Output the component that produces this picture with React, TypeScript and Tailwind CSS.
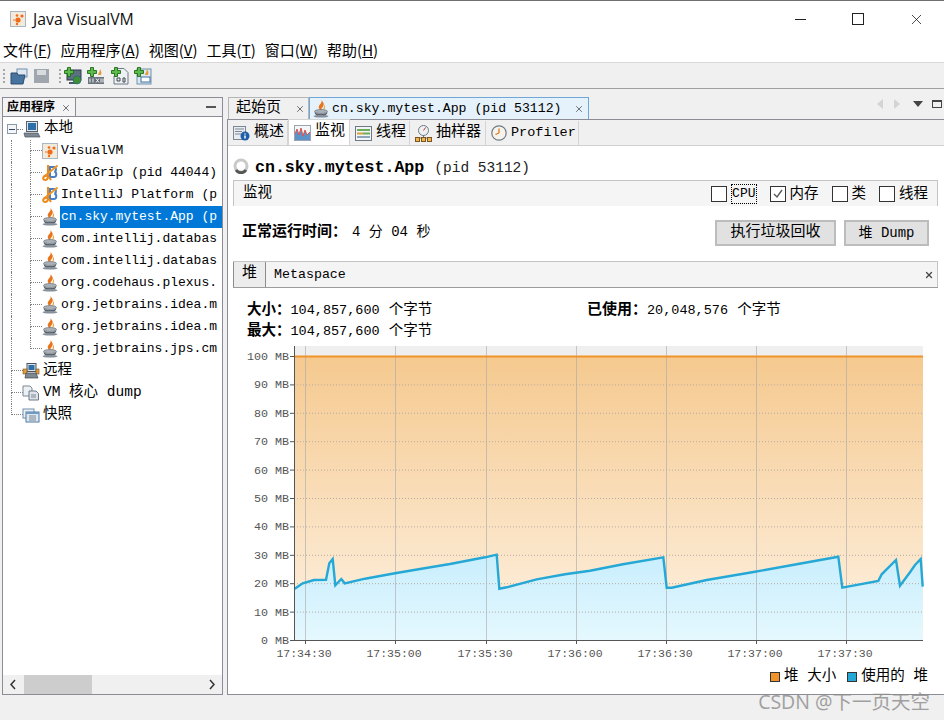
import { X } from 'lucide-react'

const MONO = "font-['Liberation_Mono','Noto_Sans_CJK_SC',monospace]"
const LINE = 'border-dotted border-[#808080]'

const JavaIcon = () => (
  <svg width="16" height="18" viewBox="0 0 16 18" className="shrink-0">
    <path d="M8.500 0c1 2 3 3 2 5.500S8 8 8.500 10.500C5.500 9 5 7 6.500 5S9 2.500 8.500 0z" fill="#e8741c" />
    <path d="M11 4.500c.5 1.500-.5 3.500-1 6 2-1 3-3.500 1-6z" fill="#f0a040" />
    <ellipse cx="8" cy="11.500" rx="6.500" ry="2" fill="#aab0b6" stroke="#6b747c" strokeWidth="0.700" />
    <path d="M1.500 12c.5 3 2.500 4 6.500 4s6-1 6.500-4c-1 1.500-3.500 2-6.500 2s-5.500-.5-6.500-2z" fill="#56606a" />
    <ellipse cx="8" cy="16.200" rx="7.500" ry="1.400" fill="#87909a" />
  </svg>
)

const VmIcon = ({ size = 16 }: { size?: number }) => (
  <svg width={size} height={size} viewBox="0 0 16 16" className="shrink-0">
    <rect x="0.500" y="0.500" width="15" height="15" fill="#f3ead9" stroke="#a9b6c4" />
    <circle cx="8" cy="9" r="2.600" fill="#ef6c1a" />
    <circle cx="7" cy="4.500" r="1.300" fill="#ef6c1a" />
    <circle cx="12" cy="5" r="1.600" fill="#ef6c1a" />
    <circle cx="4" cy="9" r="1" fill="#f29a5e" />
    <circle cx="7" cy="13" r="1.200" fill="#ef6c1a" />
  </svg>
)

const JbIcon = () => (
  <svg width="16" height="18" viewBox="0 0 16 18" className="shrink-0">
    <path d="M8 3h4c2.500 0 2.500 4.500.3 4.800 2.700.3 2.700 5.200-.3 5.200H8z" fill="none" stroke="#4a7fc4" strokeWidth="2" />
    <path d="M15.500 1.500L1.500 13" fill="none" stroke="#f09a2c" strokeWidth="2" />
    <path d="M6 1v11c0 2-1 4-3 4s-2.500-2-1-3.500 5-.5 7 3.500" fill="none" stroke="#ec8a1c" strokeWidth="2" />
  </svg>
)

const HostIcon = () => (
  <svg width="18" height="17" viewBox="0 0 18 17" className="shrink-0">
    <rect x="3.500" y="0.500" width="11" height="10" fill="#dfe4ea" stroke="#59626c" />
    <rect x="5" y="2" width="8" height="7" fill="#2e6fa8" />
    <path d="M1 12h14l2 4H2z" fill="#7d8893" stroke="#4a535c" strokeWidth="0.700" />
  </svg>
)

const RemoteIcon = () => (
  <svg width="18" height="17" viewBox="0 0 18 17" className="shrink-0">
    <rect x="5" y="0.500" width="9" height="8" fill="#dfe4ea" stroke="#4a535c" />
    <rect x="6.500" y="2" width="6" height="5" fill="#2e6fa8" />
    <rect x="1" y="6" width="4" height="5" fill="#e39a3a" stroke="#7a5520" strokeWidth="0.600" />
    <rect x="14" y="6" width="3" height="5" fill="#e39a3a" stroke="#7a5520" strokeWidth="0.600" />
    <path d="M4 10h10l2 5H3z" fill="#7d8893" stroke="#3e464e" strokeWidth="0.700" />
  </svg>
)

const DumpIcon = () => (
  <svg width="18" height="17" viewBox="0 0 18 17" className="shrink-0">
    <path d="M1 1h7l2 2v8H1z" fill="#eef1f4" stroke="#7b8794" />
    <path d="M7 6h7l2.500 2.500V15H7z" fill="#dfe4ea" stroke="#6d7986" />
    <path d="M9 10h5M9 12h5" stroke="#7b8794" />
  </svg>
)

const SnapIcon = () => (
  <svg width="18" height="17" viewBox="0 0 18 17" className="shrink-0">
    <rect x="1" y="2" width="11" height="9" fill="#eef1f4" stroke="#6f8fae" />
    <rect x="4" y="5" width="13" height="10" fill="#dfe8f0" stroke="#4f7aa5" />
    <path d="M4 5h13v2H4z" fill="#6f9ac4" />
    <path d="M7 9h7M7 11h7M7 13h7" stroke="#7b8794" />
  </svg>
)

const PlusBadge = () => (
  <path d="M3.500 0.500h3v3h3v3h-3v3h-3v-3h-3v-3h3z" fill="#5dbb4a" stroke="#1f6b1a" strokeWidth="0.900" />
)

const ToolIcon = ({ kind }: { kind: string }) => (
  <svg width="18" height="18" viewBox="0 0 18 18" className="shrink-0">
    {kind === 'host' && (
      <>
        <rect x="3" y="3" width="14" height="10" fill="#5d7082" stroke="#2e3d4c" />
        <rect x="5" y="15" width="9" height="2" fill="#4a5a6a" />
        <circle cx="13" cy="13" r="4" fill="#3f8f3a" stroke="#1f5f7a" strokeWidth="0.600" />
      </>
    )}
    {kind === 'jmx' && (
      <>
        <rect x="1" y="10" width="16" height="7" fill="#6a737c" />
        <path d="M13 2c1 2 2 3 1 6h-3c0-2 2-3 2-6z" fill="#e39a3a" />
        <path d="M3 11.500v4M6 11.500v4M9 11.500l3 4M12 11.500l-3 4M14 11.500v4M16 11.500v4" stroke="#f2f4f6" />
      </>
    )}
    {kind === 'dump' && (
      <>
        <path d="M6 1.500h7l4 4v11.500H3v-8h3z" fill="#eef1f4" stroke="#6d7986" />
        <path d="M6 11h3v3H6zM12 11h2v4h-2z" fill="none" stroke="#3c4650" />
      </>
    )}
    {kind === 'snap' && (
      <>
        <rect x="3" y="2" width="14" height="15" fill="#dfe8f0" stroke="#6f8fae" />
        <rect x="7" y="10" width="9" height="5" fill="#fff" stroke="#3f6f9e" />
        <path d="M13 2c1 2 2 3 1 6h-3c0-2 2-3 2-6z" fill="#e39a3a" />
      </>
    )}
    <PlusBadge />
  </svg>
)

const Elbow = ({ last }: { last?: boolean }) => (
  <div className="h-full w-[12px] shrink-0">
    <div className={`h-[11px] border-b border-l ${LINE}`} />
    {!last && <div className={`h-[11px] border-l ${LINE}`} />}
  </div>
)

const Guide = () => <div className={`h-full w-[19px] shrink-0 border-l ${LINE}`} />

const Leaf = ({ icon, text, selected, last }: { icon: React.ReactNode; text: string; selected?: boolean; last?: boolean }) => (
  <div className="flex h-[22px] items-center">
    <div className="w-[8px] shrink-0" />
    <Guide />
    <Elbow last={last} />
    <div className="w-[16px] shrink-0">{icon}</div>
    <div className={`ml-[2px] flex h-full min-w-0 flex-1 items-center whitespace-nowrap pl-[1px] text-[13px] ${selected ? 'bg-[#0078d7] text-white' : 'text-black'}`}>
      {text}
    </div>
  </div>
)

const TopNode = ({ icon, text, last }: { icon: React.ReactNode; text: string; last?: boolean }) => (
  <div className="flex h-[22px] items-center">
    <div className="w-[8px] shrink-0" />
    <Elbow last={last} />
    <div className="-ml-[1px] mr-[3px]">{icon}</div>
    <span className="text-[14.500px] text-black">{text}</span>
  </div>
)

// the tree clips long names at the panel edge, the strings are what is visible
const TREE = [
  { kind: 'jb', text: 'DataGrip (pid 44044)' },
  { kind: 'jb', text: 'IntelliJ Platform (p' },
  { kind: 'java', text: 'cn.sky.mytest.App (p', selected: true },
  { kind: 'java', text: 'com.intellij.databas' },
  { kind: 'java', text: 'com.intellij.databas' },
  { kind: 'java', text: 'org.codehaus.plexus.' },
  { kind: 'java', text: 'org.jetbrains.idea.m' },
  { kind: 'java', text: 'org.jetbrains.idea.m' },
  { kind: 'java', text: 'org.jetbrains.jps.cm', last: true },
]

const Sidebar = () => (
  <div className="flex w-[221px] shrink-0 flex-col border border-[#8c8c96] bg-white">
    <div className="flex h-[19px] shrink-0 items-stretch border-b border-[#8c8c96] bg-[#f0f0f0]">
      <div className="flex w-[73px] items-center border-r border-[#8c8c96] bg-[#f4f4f4] pl-[4px] pt-[1px] text-[12px] font-bold text-black">
        应用程序
        <X className="ml-[6px] h-[10px] w-[10px] text-[#555]" strokeWidth={2} />
      </div>
      <div className="flex flex-1 items-center justify-end pr-[6px]">
        <div className="h-[2px] w-[10px] bg-[#555]" />
      </div>
    </div>
    <div className={`min-h-0 flex-1 overflow-hidden pt-[1px] ${MONO}`}>
      <div className="flex h-[22px] items-center">
        <div className="ml-[4px] flex h-[10px] w-[10px] items-center justify-center border border-[#8a9aaa] bg-[#f4f6f8]">
          <div className="h-[1px] w-[6px] bg-[#2a4a6a]" />
        </div>
        <div className={`w-[6px] border-b ${LINE}`} />
        <HostIcon />
        <span className="ml-[3px] text-[14.500px] text-black">本地</span>
      </div>
      <Leaf icon={<VmIcon />} text="VisualVM" />
      {TREE.map((row, i) => (
        <Leaf
          key={i}
          icon={row.kind === 'jb' ? <JbIcon /> : <JavaIcon />}
          text={row.text}
          selected={row.selected}
          last={row.last}
        />
      ))}
      <TopNode icon={<RemoteIcon />} text="远程" />
      <TopNode icon={<DumpIcon />} text="VM 核心 dump" />
      <TopNode icon={<SnapIcon />} text="快照" last />
    </div>
    <div className="flex h-[19px] shrink-0 items-center bg-[#f0f0f0]">
      <svg width="21" height="19" viewBox="0 0 21 19" className="shrink-0">
        <path d="M12 5l-4 4.500 4 4.500" fill="none" stroke="#333" strokeWidth="1.500" />
      </svg>
      <div className="h-full w-[68px] bg-[#cdcdcd]" />
      <div className="flex-1" />
      <svg width="21" height="19" viewBox="0 0 21 19" className="shrink-0">
        <path d="M9 5l4 4.500-4 4.500" fill="none" stroke="#333" strokeWidth="1.500" />
      </svg>
    </div>
  </div>
)

const OverviewIcon = () => (
  <svg width="17" height="16" viewBox="0 0 17 16">
    <rect x="0.500" y="1.500" width="12" height="13" fill="#e8edf2" stroke="#7b8794" />
    <path d="M2 4h9M2 6.500h7M2 9h6" stroke="#7b8794" />
    <circle cx="12" cy="11" r="4.500" fill="#1f5fa8" />
    <path d="M12 8.500v1M12 10.500v3" stroke="#fff" strokeWidth="1.500" />
  </svg>
)

const MonitorIcon = () => (
  <svg width="17" height="16" viewBox="0 0 17 16">
    <rect x="0.500" y="0.500" width="16" height="15" fill="#f4f6f8" stroke="#9aa5b0" />
    <path d="M1 15V9l2-5 2 6 2-7 2 8 2-6 2 5 3-3v8z" fill="#5b93c9" />
    <path d="M1 9l2-5 2 6 2-7 2 8 2-6 2 5 3-3" fill="none" stroke="#d9534f" />
  </svg>
)

const ThreadsIcon = () => (
  <svg width="17" height="15" viewBox="0 0 17 15">
    <rect x="0.500" y="0.500" width="16" height="14" fill="#f2f4f6" stroke="#6d7986" />
    <path d="M2 4h13" stroke="#6cab5c" strokeWidth="2" />
    <path d="M2 7.500h6" stroke="#d9a13c" strokeWidth="2" />
    <path d="M8 7.500h7" stroke="#6cab5c" strokeWidth="2" />
    <path d="M2 11h13" stroke="#8fa5bb" strokeWidth="2" />
  </svg>
)

const SamplerIcon = () => (
  <svg width="17" height="17" viewBox="0 0 17 17">
    <circle cx="8.500" cy="5.500" r="5" fill="#eef1f4" stroke="#6d7986" />
    <path d="M8.500 5.500l2-3" stroke="#c0392b" />
    <path d="M8.500 10v3M3 13h11" stroke="#6d7986" />
    <rect x="0.500" y="12.500" width="4" height="4" fill="#f0b64a" stroke="#7a5520" />
    <rect x="6.500" y="12.500" width="4" height="4" fill="#f0b64a" stroke="#7a5520" />
    <rect x="12.500" y="12.500" width="4" height="4" fill="#f0b64a" stroke="#7a5520" />
  </svg>
)

const ProfilerIcon = () => (
  <svg width="16" height="16" viewBox="0 0 16 16">
    <circle cx="8" cy="8" r="7.200" fill="#f6f3ea" stroke="#6d7986" strokeWidth="1.200" />
    <path d="M8 8V3.500M8 8l-3.500 1.500" stroke="#d9791f" strokeWidth="1.300" fill="none" />
  </svg>
)

const SubTab = ({ icon, text, width, active, mono }: { icon: React.ReactNode; text: string; width: string; active?: boolean; mono?: boolean }) => (
  <div className={`flex items-center gap-[4px] border-r border-[#d4d4d4] pl-[5px] ${width} ${active ? '-mt-[2px] h-[26px] border-l border-t bg-white' : 'h-[24px] bg-[#f0f0f0]'}`}>
    {icon}
    <span className={mono ? 'text-[13.500px] text-black' : 'text-[15px] text-black'}>{text}</span>
  </div>
)

const Check = ({ label, checked, focused }: { label: string; checked?: boolean; focused?: boolean }) => (
  <div className="flex items-center gap-[4px]">
    <div className="flex h-[16px] w-[16px] items-center justify-center border border-[#333] bg-white">
      {checked && (
        <svg width="12" height="12" viewBox="0 0 12 12">
          <path d="M2 6l3 3 5-7" fill="none" stroke="#555" strokeWidth="1.300" />
        </svg>
      )}
    </div>
    <span className={`leading-[18px] text-black ${focused ? 'border border-dotted border-black text-[13px]' : 'text-[14.500px]'}`}>{label}</span>
  </div>
)

const HEAP_LINE =
  '294.700,588.700 302.700,583.300 314,580 326,579.700 329.300,563.300 332.700,559 335.300,585.300 341.300,579 344.700,583.300 365,578.700 395,573.300 420,569 450,564 485,557.300 496.700,554.700 499.300,588.700 506.700,587.300 536.700,579.300 565,574.300 590,570.700 623,564.300 663.300,557.300 666.700,587.700 671.700,587.700 706.700,580 755,571.700 796.700,564.300 838.300,556.700 842.300,587.700 878.300,581 881.700,574.300 896,560 900,585.700 910,572.300 915,565 920.700,559 922.700,586.700'

const Y_TICKS = [0, 10, 20, 30, 40, 50, 60, 70, 80, 90, 100]
const X_TICKS = [
  [305, '17:34:30'],
  [395, '17:35:00'],
  [486, '17:35:30'],
  [576, '17:36:00'],
  [666, '17:36:30'],
  [756, '17:37:00'],
  [846, '17:37:30'],
] as const

const HeapChart = () => (
  <svg width="705" height="320" viewBox="233 345 705 320" className="block">
    <defs>
      <linearGradient id="heapSize" x1="0" y1="356" x2="0" y2="640" gradientUnits="userSpaceOnUse">
        <stop offset="0" stopColor="#f5c98f" />
        <stop offset="1" stopColor="#fef2e3" />
      </linearGradient>
      <linearGradient id="heapUsed" x1="0" y1="555" x2="0" y2="640" gradientUnits="userSpaceOnUse">
        <stop offset="0" stopColor="#c8eefd" />
        <stop offset="1" stopColor="#e5f8fe" />
      </linearGradient>
    </defs>
    <rect x="294" y="346" width="629" height="10" fill="#efefef" />
    <rect x="294" y="356" width="629" height="284" fill="url(#heapSize)" />
    <polygon points={`294.700,640 ${HEAP_LINE} 922.700,640`} fill="url(#heapUsed)" />
    {Y_TICKS.map((v) => {
      const y = 640 - v * 2.84
      return (
        <g key={v}>
          {v > 0 && v < 100 && <line x1="294" x2="923" y1={y + 0.5} y2={y + 0.5} stroke="#b5aca0" strokeDasharray="1 2" />}
          <line x1="290" x2="294" y1={y + 0.5} y2={y + 0.5} stroke="#555" />
          <text x="289" y={y + 4} textAnchor="end" fontSize="11.700" fill="#555" fontFamily="Liberation Mono">
            {v} MB
          </text>
        </g>
      )
    })}
    {X_TICKS.map(([x, label]) => (
      <g key={label}>
        <line x1={x + 0.5} x2={x + 0.5} y1="346" y2="640" stroke="#a8a8a8" strokeOpacity="0.600" />
        <line x1={x + 0.5} x2={x + 0.5} y1="640" y2="644" stroke="#555" />
        <text x={x - 1} y="657" textAnchor="middle" fontSize="11.500" fill="#555" fontFamily="Liberation Mono">
          {label}
        </text>
      </g>
    ))}
    <line x1="294" x2="923" y1="356.500" y2="356.500" stroke="#f0932b" strokeWidth="2" />
    <polyline points={HEAP_LINE} fill="none" stroke="#25a8d6" strokeWidth="2.400" />
    <line x1="294.500" x2="294.500" y1="346" y2="641" stroke="#555" />
    <line x1="294" x2="923" y1="640.500" y2="640.500" stroke="#555" />
  </svg>
)

const LegendItem = ({ color, label }: { color: string; label: string }) => (
  <div className="flex items-center gap-[4px]">
    <div className={`h-[10px] w-[10px] border border-[#333] ${color}`} />
    <span className="text-[14.500px] text-black">{label}</span>
  </div>
)

const ByteCount = ({ value }: { value: string }) => (
  <span className="text-[13.500px]">
    {value} <span className="ml-[1px] text-[14.500px]">个字节</span>
  </span>
)

const MENU: [string, string][] = [
  ['文件', 'F'],
  ['应用程序', 'A'],
  ['视图', 'V'],
  ['工具', 'T'],
  ['窗口', 'W'],
  ['帮助', 'H'],
]

const Content = () => (
  <div className="flex min-w-0 flex-1 flex-col">
    <div className="flex h-[22px] shrink-0 items-stretch pl-[1px]">
      <div className="flex w-[81px] items-center justify-between border border-b-0 border-[#b5b5b5] bg-[#f0f0f0] pl-[7px] pr-[3px] pt-[1px] text-[15px] text-black">
        起始页
        <X className="h-[10px] w-[10px] text-[#555]" strokeWidth={2} />
      </div>
      <div className="flex w-[280px] items-center gap-[3px] border border-b-0 border-[#6fa8d8] bg-[#e5f1fb] pl-[3px] pr-[4px] text-[13.200px] text-black">
        <JavaIcon />
        <span className="flex-1 whitespace-nowrap">cn.sky.mytest.App (pid 53112)</span>
        <X className="h-[10px] w-[10px] text-[#555]" strokeWidth={2} />
      </div>
      <div className="flex flex-1 items-center justify-end gap-[9px] pb-[8px] pr-[2px]">
        <svg width="8" height="10" viewBox="0 0 8 10"><path d="M7 0v10L1 5z" fill="#d4d4d4" /></svg>
        <svg width="8" height="10" viewBox="0 0 8 10"><path d="M1 0v10l6-5z" fill="#d4d4d4" /></svg>
        <svg width="10" height="6" className="ml-[3px]" viewBox="0 0 10 6"><path d="M0 0h10L5 6z" fill="#444" /></svg>
        <div className="h-[8px] w-[10px] border border-t-2 border-[#444]" />
      </div>
    </div>
    <div className="flex min-h-0 flex-1 flex-col border-b border-l border-t border-[#8c8c96] bg-white">
      <div className="flex h-[26px] shrink-0 items-end border-b border-[#d0d0d0] bg-[#f0f0f0]">
        <SubTab icon={<OverviewIcon />} text="概述" width="w-[60px]" />
        <SubTab icon={<MonitorIcon />} text="监视" width="w-[62px]" active />
        <SubTab icon={<ThreadsIcon />} text="线程" width="w-[60px]" />
        <SubTab icon={<SamplerIcon />} text="抽样器" width="w-[76px]" />
        <SubTab icon={<ProfilerIcon />} text="Profiler" width="w-[93px]" mono />
      </div>
      <div className="flex h-[34px] shrink-0 items-center pl-[5px] pt-[11px]">
        <svg width="16" height="16" viewBox="0 0 16 16" className="-mt-[6px]">
          <circle cx="8" cy="8" r="6" fill="none" stroke="#c9c9c9" strokeWidth="3" />
          <path d="M3 12a6 6 0 0 0 10 0" fill="none" stroke="#555" strokeWidth="3" />
        </svg>
        <span className="ml-[6px] whitespace-nowrap text-[16.600px] font-bold text-black">cn.sky.mytest.App</span>
        <span className="ml-[10px] whitespace-nowrap text-[14.500px] text-[#222]">(pid 53112)</span>
      </div>
      <div className="ml-[5px] mr-[6px] flex h-[26px] shrink-0 items-center justify-between border-l border-r border-t border-[#c4c4c4] bg-[#f5f5f5] pl-[9px] pr-[9px]">
        <span className="text-[14.500px] text-black">监视</span>
        <div className="flex items-center gap-[13px]">
          <Check label="CPU" focused />
          <Check label="内存" checked />
          <Check label="类" />
          <Check label="线程" />
        </div>
      </div>
      <div className="ml-[14px] mr-[15px] flex h-[55px] shrink-0 items-start justify-between">
        <div className="mt-[17px] whitespace-nowrap text-[14px] leading-[18px] text-black">
          <b className="text-[15px]">正常运行时间：</b>
          <span className="ml-[5px]">4 分 04 秒</span>
        </div>
        <div className="mt-[14px] flex gap-[8px]">
          <div className="flex h-[26px] w-[121px] items-center justify-center border-2 border-[#bcbcbc] bg-[#e1e1e1] text-[15px] text-black">
            执行垃圾回收
          </div>
          <div className="flex h-[26px] w-[85px] items-center justify-center border-2 border-[#bcbcbc] bg-[#e1e1e1] text-[14px] text-black">
            堆 Dump
          </div>
        </div>
      </div>
      <div className="ml-[5px] mr-[6px] flex h-[27px] shrink-0 items-stretch border-b border-t border-[#9c9c9c] border-t-[#c4c4c4] bg-[#f4f4f4]">
        <div className="flex w-[33px] items-center justify-center border-l border-r border-[#8c8c8c] bg-[#ececec] text-[15px] text-black">堆</div>
        <div className="flex flex-1 items-center justify-between border-r border-[#c4c4c4] pl-[8px] pr-[3px] text-[13.300px] text-black">
          Metaspace
          <X className="h-[10px] w-[10px] text-[#444]" strokeWidth={3} />
        </div>
      </div>
      <div className="ml-[19px] mt-[12px] grid h-[42px] shrink-0 grid-cols-[340px_1fr] leading-[21px] text-black">
        <div><b className="text-[14.500px]">大小：</b><ByteCount value="104,857,600" /></div>
        <div><b className="text-[15px]">已使用：</b><ByteCount value="20,048,576" /></div>
        <div><b className="text-[14.500px]">最大：</b><ByteCount value="104,857,600" /></div>
      </div>
      <div className="ml-[5px] mt-[3px] shrink-0">
        <HeapChart />
      </div>
      <div className="mr-[16px] mt-[1px] flex justify-end gap-[11px]">
        <LegendItem color="bg-[#f0932b]" label="堆 大小" />
        <LegendItem color="bg-[#25a8d6]" label="使用的 堆" />
      </div>
    </div>
  </div>
)

export default function App() {
  return (
    <div className={`relative flex h-[720px] w-[944px] flex-col overflow-hidden bg-[#f0f0f0] ${MONO}`}>
      <div className="flex h-[37px] shrink-0 items-center border-t border-[#707070] bg-white pl-[10px]">
        <VmIcon />
        <span className="ml-[7px] mt-[2px] font-['Open_Sans','Noto_Sans_CJK_SC',sans-serif] text-[15.800px] text-[#111]">Java VisualVM</span>
        <div className="-mr-px ml-auto flex items-center text-black">
          <div className="flex w-[58px] justify-center"><div className="h-px w-[11px] bg-[#222]" /></div>
          <div className="flex w-[58px] justify-center"><div className="h-[12px] w-[12px] border border-[#222]" /></div>
          <div className="flex w-[58px] justify-center"><X className="h-[17px] w-[17px]" strokeWidth={1} /></div>
        </div>
      </div>
      <div className="flex h-[25px] shrink-0 items-center gap-[9px] bg-white pl-[3px] pt-[2px] font-['Noto_Sans_CJK_SC',sans-serif] text-[15px] text-black">
        {MENU.map(([name, key]) => (
          <span key={key} className="whitespace-nowrap">
            {name}(<span className="underline">{key}</span>)
          </span>
        ))}
      </div>
      <div className="flex h-[27px] shrink-0 items-center gap-[5px] border-b border-t border-b-[#a0a0a0] border-t-[#d8d8d8] bg-[#f0f0f0] pl-[3px]">
        <div className="h-[14px] w-[2px] border-l-2 border-dotted border-[#a8a8a8]" />
        <svg width="18" height="18" viewBox="0 0 18 18">
          <rect x="7" y="2" width="10" height="8" fill="#dfe8f0" stroke="#6f8fae" />
          <path d="M1 6h6l1 2h7l-2 9H1z" fill="#46749e" stroke="#2c4f70" />
        </svg>
        <svg width="17" height="16" viewBox="0 0 17 16">
          <rect x="1" y="1" width="15" height="14" fill="#9fa6ad" />
          <rect x="4" y="2" width="9" height="5" fill="#d8dcdf" />
        </svg>
        <div className="ml-[4px] h-[14px] w-[2px] border-l-2 border-dotted border-[#a8a8a8]" />
        <div className="ml-[-2px] flex items-center gap-[5.300px]">
          <ToolIcon kind="host" />
          <ToolIcon kind="jmx" />
          <ToolIcon kind="dump" />
          <ToolIcon kind="snap" />
        </div>
      </div>
      <div className="flex min-h-0 flex-1 gap-[4px] pb-[25px] pl-[2px] pt-[8px]">
        <Sidebar />
        <Content />
      </div>
      <div className="absolute bottom-[7px] right-[14px] whitespace-nowrap font-['Open_Sans','Noto_Sans_CJK_SC',sans-serif] text-[19.500px] leading-[22px] text-[#8c8c8c] opacity-80">
        CSDN @下一页天空
      </div>
    </div>
  )
}
